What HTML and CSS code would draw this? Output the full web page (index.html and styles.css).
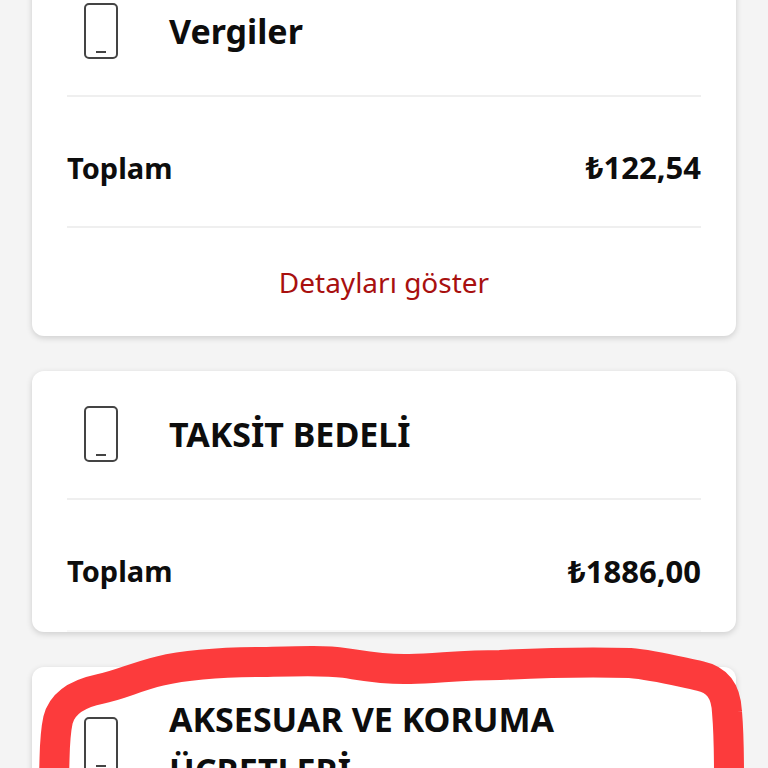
FILE: index.html
```html
<!DOCTYPE html>
<html lang="tr">
<head>
    <meta charset="UTF-8">
    <meta name="viewport" content="width=device-width, initial-scale=1.0">
    <title>Fatura Detayı</title>
    <link rel="stylesheet" href="styles.css">
</head>
<body>
    <div class="page">
        <div class="card-list">
            <section class="card">
                <div class="card-header">
                    <svg class="phone-icon" viewBox="0 0 34 56"><rect x="1" y="1" width="32" height="54" rx="4"/><path d="M12 49h10"/></svg>
                    <h2 class="card-title">Vergiler</h2>
                </div>
                <div class="total-row">
                    <span>Toplam</span>
                    <span class="amount">₺122,54</span>
                </div>
                <div class="details-row">
                    <a class="details-link" href="#">Detayları göster</a>
                </div>
            </section>

            <section class="card">
                <div class="card-header">
                    <svg class="phone-icon" viewBox="0 0 34 56"><rect x="1" y="1" width="32" height="54" rx="4"/><path d="M12 49h10"/></svg>
                    <h2 class="card-title">TAKSİT BEDELİ</h2>
                </div>
                <div class="total-row total-row-last">
                    <span>Toplam</span>
                    <span class="amount">₺1886,00</span>
                </div>
            </section>

            <section class="card">
                <div class="card-header">
                    <svg class="phone-icon" viewBox="0 0 34 56"><rect x="1" y="1" width="32" height="54" rx="4"/><path d="M12 49h10"/></svg>
                    <h2 class="card-title">AKSESUAR VE KORUMA ÜCRETLERİ</h2>
                </div>
            </section>
        </div>

        <!-- red marker drawn over the screenshot -->
        <svg class="scribble" viewBox="0 0 768 768">
            <path d="M54 775C55 755 54 738 58 720C62 704 76 694 100 689C120 685 135 677 160 671C185 665 225 662 267 662C300 661 325 660 345 663C365 666 385 670 410 669C440 668 465 665 500 665C540 663 590 662 630 663C655 665 680 672 700 676C718 680 726 692 727 712C729 735 729 755 729 775"/>
        </svg>
    </div>
</body>
</html>
```

FILE: styles.css
```css
html, body {
    margin: 0;
    height: 768px;
    overflow: hidden;
}
body {
    background-color: #f4f4f4;
    font-family: "Noto Sans", sans-serif;
    color: #0d0d0d;
}
.page {
    position: relative;
    height: 768px;
    overflow: hidden;
}
.card-list {
    display: flex;
    flex-direction: column;
    gap: 35px;
    margin-top: -32px;
    padding: 0 32px;
}
.card {
    background-color: #fff;
    border-radius: 12px;
    padding: 0 35px;
    box-shadow: 0 2px 6px rgba(0, 0, 0, 0.16);
}
.card-header {
    display: flex;
    align-items: center;
    gap: 51px;
    padding: 35px 17px 36px;
    border-bottom: 2px solid #efefef;
}
.phone-icon {
    flex: none;
    width: 34px;
    height: 56px;
    fill: none;
    stroke: #444;
    stroke-width: 2;
}
.card-title {
    margin: -8px 0;
    font-size: 34px;
    line-height: 51px;
    font-weight: 700;
}
.total-row {
    display: flex;
    justify-content: space-between;
    align-items: center;
    box-sizing: border-box;
    height: 131px;
    padding-top: 11px;
    font-size: 29px;
    font-weight: 700;
    border-bottom: 2px solid #efefef;
}
.amount {
    font-size: 31px;
}
.total-row-last {
    height: 132px;
    border-bottom-color: #f8f8f8;
}
.details-row {
    display: flex;
    justify-content: center;
    align-items: center;
    height: 108px;
}
.details-link {
    color: #a8100f;
    font-size: 28px;
    text-decoration: none;
}
.scribble {
    position: absolute;
    top: 0;
    left: 0;
    width: 768px;
    height: 768px;
    fill: none;
    stroke: #fc3b3c;
    stroke-width: 30;
    stroke-linecap: round;
    stroke-linejoin: round;
}
```
